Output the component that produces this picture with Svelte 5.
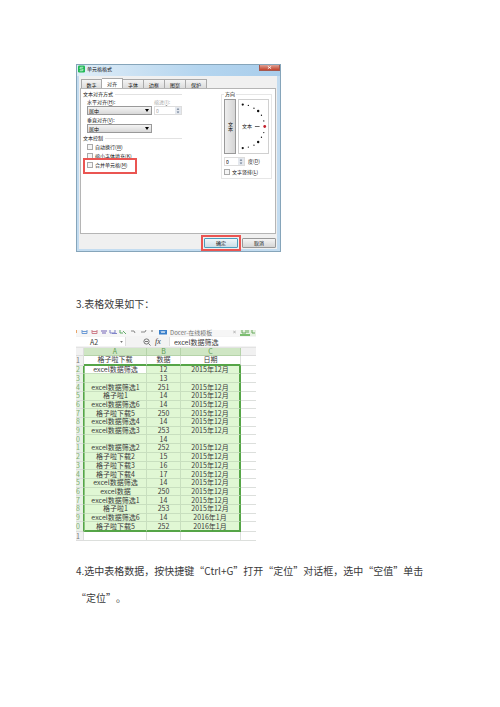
<script>
  const tabs = ['数字', '对齐', '字体', '边框', '图案', '保护'];
  let active = $state('对齐');

  // points on the orientation dial: x, y, radius
  const dots = [
    [4, 4, 1.2], [10, 5, 0.7], [16, 8, 0.7], [20.5, 11, 1.3], [24, 15.5, 0.7], [26.5, 21.5, 0.7],
    [26.5, 34, 0.7], [24, 39, 0.7], [20.5, 44, 1.3], [16, 47.5, 0.7], [10, 49.5, 0.7], [4, 50.5, 1.2]
  ];

  const rows = [
    ['格子啦下载', '数据', '日期'],
    ['excel数据筛选', '12', '2015年12月'],
    ['', '13', ''],
    ['excel数据筛选1', '251', '2015年12月'],
    ['格子啦1', '14', '2015年12月'],
    ['excel数据筛选6', '14', '2015年12月'],
    ['格子啦下载5', '250', '2015年12月'],
    ['excel数据筛选4', '14', '2015年12月'],
    ['excel数据筛选3', '253', '2015年12月'],
    ['', '14', ''],
    ['excel数据筛选2', '252', '2015年12月'],
    ['格子啦下载2', '15', '2015年12月'],
    ['格子啦下载3', '16', '2015年12月'],
    ['格子啦下载4', '17', '2015年12月'],
    ['excel数据筛选', '14', '2015年12月'],
    ['excel数据', '250', '2015年12月'],
    ['excel数据筛选1', '14', '2015年12月'],
    ['格子啦1', '253', '2015年12月'],
    ['excel数据筛选6', '14', '2016年1月'],
    ['格子啦下载5', '252', '2016年1月'],
    ['', '', '']
  ];
</script>

<main class="page" lang="zh-CN">
  <section class="dialog" aria-label="单元格格式">
    <header class="titlebar">
      <svg class="logo" viewBox="0 0 8 8" aria-hidden="true">
        <rect width="8" height="8" rx="1.5" fill="#1fb954" />
        <path d="M6 2H3.2a1 1 0 0 0 0 2h1.6a1 1 0 0 1 0 2H2" fill="none" stroke="#fff" stroke-width="0.8" />
      </svg>
      <span class="title">单元格格式</span>
      <button class="close" aria-label="关闭">
        <svg viewBox="0 0 6 6"><path d="M1 1.5l4 3M5 1.5l-4 3" stroke="#fff" stroke-width="1" /></svg>
      </button>
    </header>

    <div class="client">
      <nav class="tabs">
        {#each tabs as tab}
          <button class="tab" class:active={tab === active} onclick={() => (active = tab)}>{tab}</button>
        {/each}
      </nav>

      <div class="panel">
        <div class="left">
          <div class="legend"><span>文本对齐方式</span></div>
          <div class="fields">
            <div class="field wide">
              <label for="horizontal">水平对齐(<u>H</u>):</label>
              <div class="combo">
                <select id="horizontal"><option>居中</option></select>
                <svg viewBox="0 0 4 3"><path d="M0 0h4L2 3z" /></svg>
              </div>
            </div>
            <div class="field muted">
              <label for="indent">缩进(<u>I</u>):</label>
              <div class="spinner">
                <input id="indent" value="0" disabled />
                <svg viewBox="0 0 6 8"><path d="M1.5 3L3 1l1.5 2zM1.5 5L3 7l1.5-2z" /></svg>
              </div>
            </div>
          </div>
          <div class="fields">
            <div class="field wide">
              <label for="vertical">垂直对齐(<u>V</u>):</label>
              <div class="combo">
                <select id="vertical"><option>居中</option></select>
                <svg viewBox="0 0 4 3"><path d="M0 0h4L2 3z" /></svg>
              </div>
            </div>
          </div>
          <div class="legend"><span>文本控制</span></div>
          <div class="checks">
            <label class="check"><input type="checkbox" /><span>自动换行(<u>W</u>)</span></label>
            <label class="check"><input type="checkbox" /><span>缩小字体填充(<u>K</u>)</span></label>
            <label class="check marked"><input type="checkbox" /><span>合并单元格(<u>M</u>)</span></label>
          </div>
        </div>

        <fieldset class="direction">
          <legend>方向</legend>
          <div class="orient">
            <button class="upright">文本</button>
            <div class="dial">
              <svg viewBox="0 0 31 55" aria-hidden="true">
                {#each dots as [x, y, r]}
                  <circle cx={x} cy={y} {r} fill="#111" />
                {/each}
                <path d="M17 27.5h5" stroke="#333" stroke-width="0.8" />
                <circle cx="27.5" cy="27.5" r="1.5" fill="#c21f2b" />
              </svg>
              <span>文本</span>
            </div>
          </div>
          <div class="degree">
            <div class="spinner">
              <input id="degree" value="0" />
              <svg viewBox="0 0 6 8"><path d="M1.5 3L3 1l1.5 2zM1.5 5L3 7l1.5-2z" /></svg>
            </div>
            <label for="degree">度(<u>D</u>)</label>
          </div>
          <label class="check"><input type="checkbox" /><span>文字竖排(<u>L</u>)</span></label>
        </fieldset>
      </div>

      <footer class="actions">
        <button class="action primary marked">确定</button>
        <button class="action">取消</button>
      </footer>
    </div>
  </section>

  <p class="step">3.表格效果如下：</p>

  <section class="sheet">
    <div class="toolbar">
      <svg class="tools" viewBox="0 0 94 6" aria-hidden="true">
        <path d="M0 0v3" stroke="#e58a3a" stroke-width="1.5" />
        <path d="M6 0v3.500h5V0M6 1.500h5" fill="none" stroke="#6c9bd6" />
        <path d="M16 0v3.500h5V0M16 1.500h5" fill="none" stroke="#cf7f8c" />
        <path d="M25 1h6M26 3h4" stroke="#7464b8" stroke-width="1.200" />
        <path d="M34 0v3h5V0M36 3.500h5" fill="none" stroke="#7f83c9" />
        <path d="M44 0v3h3M47 1l3 3" fill="none" stroke="#63ad68" />
        <path d="M55 1h3l1 2M65 2h4l1-2" fill="none" stroke="#888" />
        <path d="M76 0v2" stroke="#777" />
        <rect x="83" width="8" height="4.500" fill="#397fca" />
        <path d="M85 1l1 2 1-2 1 2 1-2" fill="none" stroke="#fff" stroke-width="0.700" />
      </svg>
      <span class="doc">Docer-在线模板</span>
      <svg class="doc-close" viewBox="0 0 4 4"><path d="M0 0l4 4M4 0L0 4" stroke="#888" stroke-width="0.7" /></svg>
      <svg class="current" viewBox="0 0 16 6" aria-hidden="true">
        <rect width="16" height="6" fill="#e6f1e2" />
        <path d="M2 0v3h4V0M8 0v3M12 0v3h3" fill="none" stroke="#68a95d" />
        <path d="M0 5h10" stroke="#58ad4a" stroke-width="1.500" />
      </svg>
    </div>
    <div class="formula">
      <div class="namebox">
        <span>A2</span>
        <svg viewBox="0 0 4 3"><path d="M0 0h4L2 3z" fill="#777" /></svg>
      </div>
      <svg class="lens" viewBox="0 0 8 8" aria-hidden="true">
        <circle cx="3.500" cy="3.500" r="2.600" fill="none" stroke="#666" stroke-width="0.900" />
        <path d="M2 3.500h3M5.500 5.500l2 2" stroke="#666" stroke-width="0.900" />
      </svg>
      <i class="fx">fx</i>
      <input class="content" value="excel数据筛选" aria-label="编辑栏" />
    </div>
    <table>
      <colgroup>
        <col class="c-num" /><col class="c-a" /><col class="c-b" /><col class="c-c" /><col />
      </colgroup>
      <thead>
        <tr><th class="corner"></th><th>A</th><th>B</th><th>C</th><th class="plain"></th></tr>
      </thead>
      <tbody>
        {#each rows as row, i}
          <tr class:selected={i > 0 && i < 20} class:top={i === 0} class:last={i === 19}>
            <th>{(i + 1) % 10}</th>
            {#each row as cell, c}
              <td class:cursor={i === 1 && c === 0}>{cell}</td>
            {/each}
            <td class="plain"></td>
          </tr>
        {/each}
      </tbody>
    </table>
  </section>

  <p class="step">4.选中表格数据，按快捷键“Ctrl+G”打开“定位”对话框，选中“空值”单击“定位”。</p>
</main>

<style>
  :global(body) {
    margin: 0;
    background: #fff;
  }

  .page {
    box-sizing: border-box;
    padding: 64px 75px 96px 76px;
    font-family: "Noto Sans CJK SC", sans-serif;
    color: #3a3a3a;
  }

  .page * {
    box-sizing: border-box;
  }

  button, input, select {
    font: inherit;
    color: inherit;
    margin: 0;
    padding: 0;
    border-radius: 0;
    appearance: none;
  }

  u {
    text-decoration-color: #999;
  }

  /* dialog */
  .dialog {
    max-width: 205px;
    padding: 0 3px 2px 2px;
    border: 1px solid #86a5ba;
    background: #c3dcf0;
    font-size: 5px;
    line-height: 8px;
    color: #111;
  }

  .titlebar {
    display: flex;
    align-items: flex-start;
    height: 11px;
    margin: 0 -3px 0 -2px;
    background: linear-gradient(90deg, #e0edf7, #b4d5ef 60%, #a9cdeb);
  }

  .logo {
    width: 7px;
    height: 8px;
    margin-left: 1px;
  }

  .title {
    margin-left: 2px;
  }

  .close {
    display: flex;
    justify-content: center;
    width: 21px;
    height: 6px;
    margin-left: auto;
    border: 1px solid #a5584e;
    border-top: 0;
    background: linear-gradient(#dda093, #c5432d);
  }

  .close svg {
    width: 5px;
    height: 5px;
  }

  .client {
    padding: 2px 1px 1px;
    background: #f0f0f0;
  }

  .tabs {
    display: flex;
    align-items: flex-end;
    height: 10px;
    padding-left: 1px;
  }

  .tab {
    width: 21px;
    height: 9px;
    border: 1px solid #a9a9a9;
    border-width: 1px 1px 0 0;
    background: linear-gradient(#f4f4f4, #dcdcdc);
    line-height: 7px;
  }

  .tab:first-child {
    border-left-width: 1px;
  }

  .tab.active {
    height: 10px;
    background: #fff;
  }

  .panel {
    display: flex;
    justify-content: space-between;
    height: 146px;
    padding: 1px 3px 0 2px;
    border: 1px solid #b5b5b5;
    background: #fff;
  }

  .left {
    width: 99px;
  }

  .legend {
    display: flex;
    align-items: center;
    gap: 2px;
  }

  .legend::after {
    content: "";
    flex: 1;
    border-top: 1px solid #e2e2e2;
  }

  .fields {
    display: flex;
    gap: 2px;
    padding-left: 4px;
    margin-bottom: 1px;
  }

  .field label {
    display: block;
    white-space: nowrap;
  }

  .field.wide {
    flex: none;
    width: 65px;
  }

  .muted {
    flex: 1;
    min-width: 0;
    color: #aaa;
  }

  .combo {
    display: flex;
    align-items: center;
    height: 9px;
    padding-right: 2px;
    border: 1px solid #999;
    background: linear-gradient(#f4f4f4, #d8d8d8);
  }

  .combo select {
    flex: 1;
    height: 7px;
    padding-left: 1px;
    border: 0;
    background: none;
    line-height: 7px;
  }

  .combo svg {
    width: 4px;
    height: 3px;
  }

  .spinner {
    display: flex;
    width: 100%;
    height: 9px;
    border: 1px solid #ddd;
    background: #fff;
  }

  .spinner input {
    flex: 1;
    min-width: 0;
    height: 7px;
    padding-left: 1px;
    border: 0;
    background: none;
    line-height: 7px;
  }

  .spinner svg {
    width: 6px;
    height: 7px;
    background: #e4e8ee;
    fill: #68788f;
  }

  .checks {
    padding-left: 4px;
  }

  .check {
    position: relative;
    display: flex;
    align-items: center;
    gap: 2px;
    width: fit-content;
    height: 9px;
    white-space: nowrap;
  }

  .check input {
    width: 6px;
    height: 6px;
    border: 1px solid #aaa;
    background: #f5f5f5;
  }

  .marked {
    position: relative;
  }

  .marked::after {
    content: "";
    position: absolute;
    border: 2px solid #ea5552;
  }

  .check.marked::after {
    inset: -2px -10px -5px -4px;
  }

  .direction {
    width: 51px;
    height: 89px;
    margin: 0;
    padding: 0 2px;
    border: 1px solid #e6e6e6;
  }

  .direction legend {
    padding: 0 1px;
  }

  .orient {
    display: flex;
    gap: 2px;
    height: 55px;
    margin-top: 1px;
  }

  .upright {
    width: 12px;
    border: 1px solid #999;
    background: linear-gradient(90deg, #eee, #d5d5d5);
    writing-mode: vertical-rl;
    text-orientation: upright;
    line-height: 10px;
  }

  .dial {
    position: relative;
    flex: 1;
    border: 1px solid #d0d0d0;
  }

  .dial svg {
    display: block;
    width: 100%;
    height: 100%;
  }

  .dial span {
    position: absolute;
    top: 22px;
    left: 3px;
  }

  .degree {
    display: flex;
    gap: 3px;
    margin: 3px 0 1px;
  }

  .degree .spinner {
    width: 21px;
  }

  .actions {
    display: flex;
    justify-content: flex-end;
    gap: 4px;
    padding-top: 4px;
  }

  .action {
    width: 34px;
    height: 10px;
    border: 1px solid #999;
    border-radius: 1px;
    background: linear-gradient(#f5f5f5, #d6d6d6);
  }

  .primary {
    border-color: #4c9dbd;
    background: linear-gradient(#f0f7fa, #cddfe8);
  }

  .action.marked::after {
    inset: -4px;
  }

  /* text */
  .step {
    margin: 0;
    font-size: 10px;
    line-height: 27px;
    text-spacing-trim: space-all;
  }

  .dialog + .step {
    margin: 38px 0 13px;
  }

  .sheet + .step {
    margin-top: 16px;
  }

  /* spreadsheet */
  .sheet {
    max-width: 180px;
    font-size: 7px;
    line-height: 8px;
    color: #3a3a3a;
  }

  .toolbar {
    display: flex;
    align-items: flex-start;
    height: 6px;
    background: #f6f6f6;
    color: #777;
  }

  .tools {
    width: 94px;
    height: 6px;
  }

  .doc {
    font-size: 6px;
    line-height: 6px;
    white-space: nowrap;
  }

  .doc-close {
    width: 3px;
    height: 4px;
    margin-left: auto;
  }

  .current {
    width: 16px;
    height: 6px;
    margin-left: 4px;
  }

  .formula {
    display: flex;
    align-items: center;
    height: 12px;
    border-bottom: 1px solid #e3e3e3;
    background: #f3f3f3;
  }

  .namebox {
    display: flex;
    align-items: center;
    justify-content: space-between;
    width: 50px;
    height: 9px;
    padding: 0 2px 0 14px;
    background: #fff;
    border-right: 1px solid #ddd;
  }

  .namebox svg {
    width: 3px;
    height: 2px;
  }

  .lens {
    width: 8px;
    height: 8px;
    margin-left: 17px;
  }

  .fx {
    width: 18px;
    padding-left: 4px;
    font-family: "Liberation Serif", serif;
    font-size: 8px;
  }

  .content {
    flex: 1;
    min-width: 0;
    height: 9px;
    padding-left: 4px;
    border: 0;
    border-left: 1px solid #ddd;
    background: #fff;
  }

  table {
    width: 100%;
    height: 193px;
    table-layout: fixed;
    border-collapse: separate;
    border-spacing: 0;
    line-height: 7px;
  }

  .c-num { width: 8px; }
  .c-a { width: 63px; }
  .c-b { width: 34px; }
  .c-c { width: 60px; }

  th, td {
    padding: 0;
    border: 0 solid #dcdfdc;
    border-width: 0 1px 1px 0;
    text-align: center;
    white-space: nowrap;
    font-weight: 400;
  }

  thead th {
    background: #cfe6c4;
    border-color: #b5d3a9;
    color: #5f9b52;
  }

  thead .corner, thead .plain, tbody th {
    background: #f1f1f1;
    border-color: #ddd;
  }

  tbody th {
    text-align: left;
    color: #777;
  }

  .selected th {
    background: #e9f1e6;
    border-right-color: #55a547;
    color: #7fae75;
  }

  .selected td {
    background: #e0f7d4;
    border-color: #c8dfbf;
  }

  .selected td.cursor, .selected .plain {
    background: #fff;
  }

  .selected .plain {
    border-color: #dcdfdc;
  }

  .selected td:nth-child(4) {
    border-right: 2px solid #55a547;
  }

  .selected td:nth-child(2) {
    border-left: 1px solid #8cc581;
  }

  .top td:not(.plain), .last td:not(.plain) {
    border-bottom: 2px solid #55a547;
  }

  .plain {
    border-right: 0;
  }
</style>
